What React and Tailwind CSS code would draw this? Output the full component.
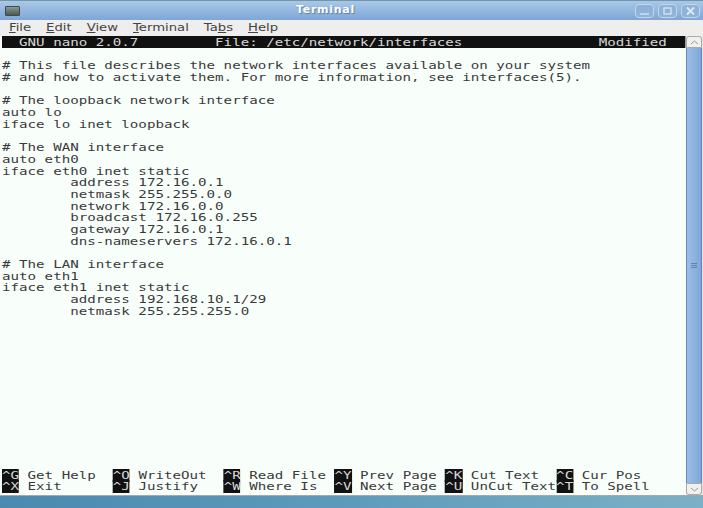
const fileLines = [
  '',
  '# This file describes the network interfaces available on your system',
  '# and how to activate them. For more information, see interfaces(5).',
  '',
  '# The loopback network interface',
  'auto lo',
  'iface lo inet loopback',
  '',
  '# The WAN interface',
  'auto eth0',
  'iface eth0 inet static',
  '        address 172.16.0.1',
  '        netmask 255.255.0.0',
  '        network 172.16.0.0',
  '        broadcast 172.16.0.255',
  '        gateway 172.16.0.1',
  '        dns-nameservers 172.16.0.1',
  '',
  '# The LAN interface',
  'auto eth1',
  'iface eth1 inet static',
  '        address 192.168.10.1/29',
  '        netmask 255.255.255.0',
];

const shortcutsTop = [
  ['^G', ' Get Help  '],
  ['^O', ' WriteOut  '],
  ['^R', ' Read File '],
  ['^Y', ' Prev Page '],
  ['^K', ' Cut Text  '],
  ['^C', ' Cur Pos'],
];

const shortcutsBottom = [
  ['^X', ' Exit      '],
  ['^J', ' Justify   '],
  ['^W', ' Where Is  '],
  ['^V', ' Next Page '],
  ['^U', ' UnCut Text'],
  ['^T', ' To Spell'],
];

const menus = [
  ['', 'F', 'ile'],
  ['', 'E', 'dit'],
  ['', 'V', 'iew'],
  ['', 'T', 'erminal'],
  ['Ta', 'b', 's'],
  ['', 'H', 'elp'],
];

const ShortcutRow = ({ items }) => (
  <div className="h-[11.7px] whitespace-pre">
    {items.map(([key, label]) => (
      <span key={key}>
        <span className="bg-[#111111] text-[#d8d8d8]">{key}</span>
        {label}
      </span>
    ))}
  </div>
);

const WindowButton = ({ children }) => (
  <div className="flex h-[14px] w-[19px] items-center justify-center rounded-[4px] border border-[#c3d6ea] bg-[#8fb2d9]">
    <svg width="13" height="10" viewBox="0 0 13 10" fill="none" stroke="#dfe9f4" strokeWidth="1.2">
      {children}
    </svg>
  </div>
);

const App = () => {
  return (
    <div className="flex h-[508px] w-[703px] flex-col overflow-hidden bg-[#f0f0ee]">
      <div className="flex h-[20px] shrink-0 items-center border-t border-[#6f97a8] bg-gradient-to-b from-[#a9c8e8] to-[#7ea6d6] pl-[5px] pr-[3px]">
        <div className="h-[10px] w-[15px] rounded-[1px] border border-[#3c4a50] bg-gradient-to-b from-[#8a9a90] to-[#4b5a50]" />
        <div className="flex-1 pr-[4px] text-center font-['DejaVu_Sans'] text-[11px] font-bold tracking-[0.7px] text-white [text-shadow:1px_1px_1px_#5c7da3]">
          Terminal
        </div>
        <div className="flex gap-[4px]">
          <WindowButton>
            <path d="M2 8h9" />
          </WindowButton>
          <WindowButton>
            <rect x="3" y="2" width="7" height="6" />
          </WindowButton>
          <WindowButton>
            <path d="M3 1.5l7 7M10 1.5l-7 7" strokeWidth="1.8" />
          </WindowButton>
        </div>
      </div>

      <div className="h-[16px] shrink-0 bg-[#eeeeec] pl-[9px] pt-[1px]">
        <div className="flex origin-left scale-x-[1.2] gap-[12.5px] font-['DejaVu_Sans'] text-[11px] leading-[14px] text-[#444444]">
          {menus.map(([before, mnemonic, after]) => (
            <span key={mnemonic}>
              {before}
              <span className="underline">{mnemonic}</span>
              {after}
            </span>
          ))}
        </div>
      </div>

      <div className="flex min-h-0 flex-1">
        <div className="min-w-0 flex-1 bg-[#f8fffb] pb-[3px] pl-[2px]">
          <div className="flex h-full w-[531px] origin-left scale-x-[1.287] flex-col justify-between font-['DejaVu_Sans_Mono'] text-[11px] leading-[13px] text-[#3a3a3a]">
            <div>
              <div className="h-[11.7px] whitespace-pre bg-[#111111] text-[#d8d8d8]">
                {'  GNU nano 2.0.7         File: /etc/network/interfaces                Modified'}
              </div>
              {fileLines.map((line, i) => (
                <div key={i} className="h-[11.7px] whitespace-pre">
                  {line}
                </div>
              ))}
            </div>
            <div>
              <ShortcutRow items={shortcutsTop} />
              <ShortcutRow items={shortcutsBottom} />
            </div>
          </div>
        </div>

        <div className="flex w-[17px] shrink-0 flex-col bg-[#e4e4e2] pr-px">
          <div className="flex h-[12px] items-center justify-center rounded-t-[3px] border border-[#a9a9a7] bg-[#f0f0ee]">
            <svg width="9" height="5" viewBox="0 0 9 5" fill="none" stroke="#9a9a98">
              <path d="M1 4l3.5-3L8 4" />
            </svg>
          </div>
          <div className="flex flex-1 flex-col items-center justify-center gap-[1px] border-x border-[#6388b4] bg-gradient-to-r from-[#9cbfe6] to-[#7ea6d8]">
            <div className="h-px w-[6px] bg-[#5f84b0]" />
            <div className="h-px w-[6px] bg-[#5f84b0]" />
            <div className="h-px w-[6px] bg-[#5f84b0]" />
          </div>
          <div className="flex h-[12px] items-center justify-center rounded-b-[3px] border border-[#a9a9a7] bg-[#f0f0ee]">
            <svg width="9" height="5" viewBox="0 0 9 5" fill="none" stroke="#9a9a98">
              <path d="M1 1l3.5 3L8 1" />
            </svg>
          </div>
        </div>
      </div>

      <div className="h-[13px] shrink-0 border-t border-[#a8a8a6] bg-gradient-to-r from-[#4a8ab0] via-[#5e9bbb] to-[#7cb0c6]" />
    </div>
  );
};

export default App;
